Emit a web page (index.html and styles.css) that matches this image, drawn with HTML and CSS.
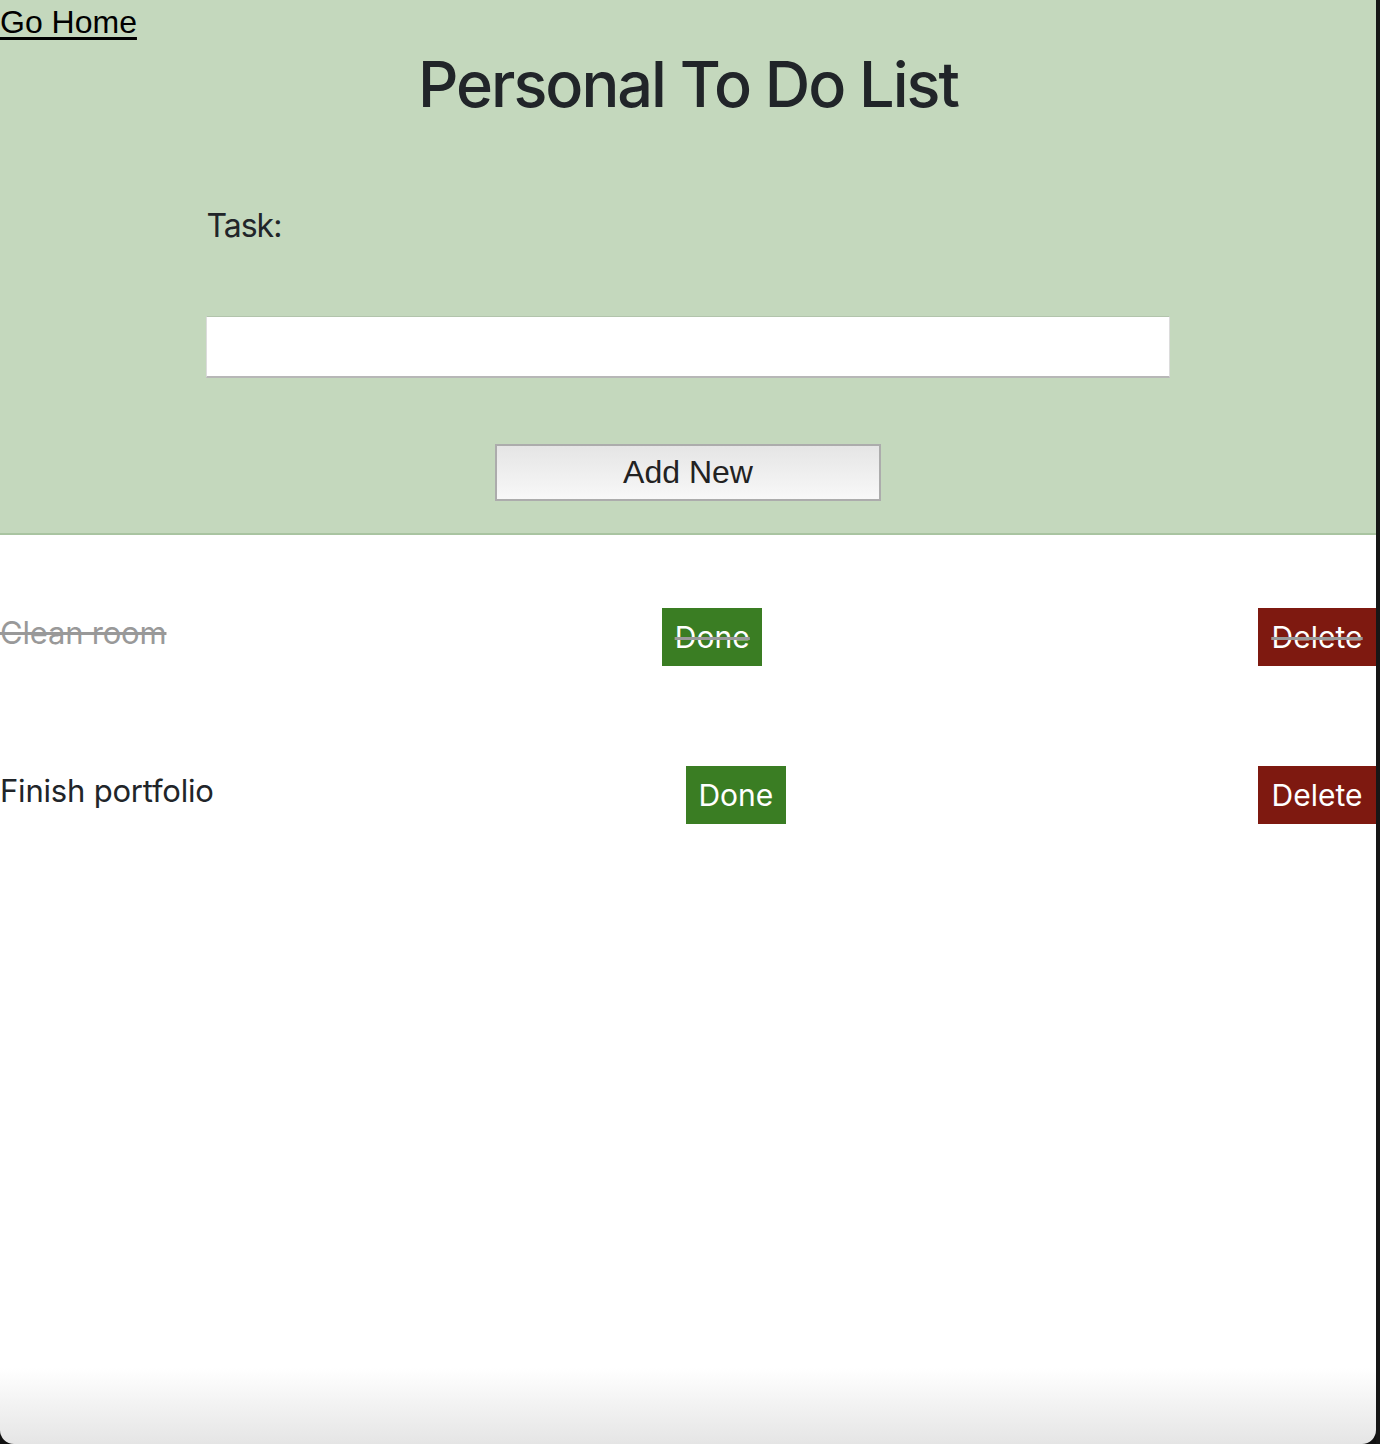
FILE: index.html
```html
<!DOCTYPE html>
<html lang="en">
<head>
<meta charset="utf-8">
<title>Personal To Do List</title>
<link rel="stylesheet" href="styles.css">
</head>
<body>
<div class="window">
  <header class="top">
    <a class="home" href="#">Go Home</a>
    <h1 class="title">Personal To Do List</h1>
    <form class="task-form">
      <label class="task-label" for="task">Task:</label>
      <input class="task-input" id="task" type="text">
      <button class="add-btn" type="button">Add New</button>
    </form>
  </header>
  <ul class="list">
    <li class="item done">
      <span class="item-text">Clean room</span>
      <button class="btn btn-done" type="button">Done</button>
      <button class="btn btn-delete" type="button">Delete</button>
    </li>
    <li class="item">
      <span class="item-text">Finish portfolio</span>
      <button class="btn btn-done" type="button">Done</button>
      <button class="btn btn-delete" type="button">Delete</button>
    </li>
  </ul>
</div>
<div class="edge"></div>
</body>
</html>
```
FILE: styles.css
```css
html, body {
  margin: 0;
  padding: 0;
}
body {
  background: #111;
  font-family: Inter, "Noto Sans", sans-serif;
  color: #212529;
  display: flex;
  width: 1380px;
}
.window {
  width: 1376px;
  min-height: 1444px;
  background: linear-gradient(to bottom, #fff calc(100% - 76px), #e5e5e5 100%);
  border-radius: 0 0 14px 14px;
  overflow: hidden;
  flex: none;
}
.edge {
  width: 4px;
  background: #161616;
  flex: none;
}
.top {
  background: #c4d8bd;
  border-bottom: 2px solid #a9c4a1;
  padding-bottom: 32px;
}
.home {
  display: block;
  width: max-content;
  font-family: "Liberation Sans", Arial, sans-serif;
  font-size: 32px;
  line-height: 44px;
  color: #000;
  text-decoration: underline;
  text-underline-offset: 4px;
}
.title {
  margin: 2px 0 0;
  text-align: center;
  font-size: 63px;
  font-weight: 500;
  line-height: 77px;
  letter-spacing: -2px;
}
.task-form {
  width: 70%;
  margin: 0 auto;
  display: flex;
  flex-direction: column;
}
.task-label {
  margin-top: 79px;
  font-size: 32px;
  line-height: 48px;
  letter-spacing: -1px;
}
.task-input {
  margin-top: 66px;
  box-sizing: border-box;
  width: 100%;
  height: 62px;
  background: #fff;
  border: 1px solid #dcdcdc;
  border-top-color: #b2c4ac;
  border-bottom: 2px solid #b7b7b7;
  outline: none;
}
.add-btn {
  margin: 66px auto 0;
  width: 40%;
  height: 57px;
  box-sizing: border-box;
  border: 2px solid #acacac;
  background: linear-gradient(to bottom, #e5e5e5, #f8f8f8);
  font-family: "Liberation Sans", Arial, sans-serif;
  font-size: 32px;
  color: #222;
}
.list {
  list-style: none;
  margin: 0;
  padding: 73px 0 0;
  display: flex;
  flex-direction: column;
  gap: 100px;
}
.item {
  display: flex;
  justify-content: space-between;
  align-items: center;
  font-size: 31px;
  letter-spacing: -0.2px;
  color: #212529;
}
.item-text {
  margin-bottom: 10px;
}
.item.done {
  color: #999;
  text-decoration: line-through;
  text-decoration-color: #999;
}
.btn {
  height: 58px;
  border: none;
  padding: 0;
  font-family: Inter, "Noto Sans", sans-serif;
  font-size: 30px;
  letter-spacing: 0;
  color: #fff;
  text-decoration: inherit;
}
.btn-done {
  width: 100px;
  background: #3a7d23;
}
.btn-delete {
  width: 118px;
  background: #7e1910;
}
```
